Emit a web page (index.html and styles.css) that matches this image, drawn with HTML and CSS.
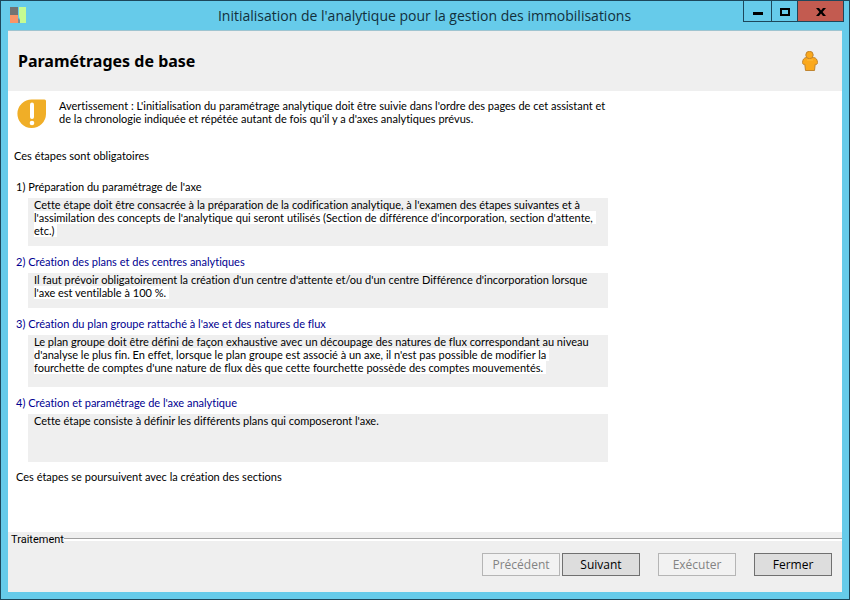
FILE: index.html
```html
<!DOCTYPE html>
<html lang="fr">
<head>
    <meta charset="UTF-8">
    <meta name="viewport" content="width=device-width, initial-scale=1.0">
    <title>Initialisation de l'analytique pour la gestion des immobilisations</title>
    <link rel="stylesheet" href="styles.css">
</head>
<body>
    <div class="window">
        <div class="titlebar">
            <svg class="app-icon" width="16" height="16" viewBox="0 0 16 16" aria-hidden="true">
                <rect width="8" height="8" fill="#737373"/>
                <rect y="8" width="8" height="8" fill="#fa9468"/>
                <path d="M9 0h7v16h-6V12L9 10z" fill="#c5fb92"/>
                <path d="M8 11l2 2v3H8z" fill="#7d8f93"/>
            </svg>
            <div class="title">Initialisation de l'analytique pour la gestion des immobilisations</div>
            <div class="controls">
                <button type="button" class="control minimize" aria-label="Réduire">
                    <svg width="12" height="10" viewBox="0 0 12 10"><path d="M1 5h10v3H1z"/></svg>
                </button>
                <button type="button" class="control maximize" aria-label="Agrandir">
                    <svg width="10" height="8" viewBox="0 0 10 8"><path d="M0 0h10v8H0zM2 2v4h6V2z" fill-rule="evenodd"/></svg>
                </button>
                <button type="button" class="control close" aria-label="Fermer la fenêtre">
                    <svg width="10" height="8" viewBox="0 0 10 8"><path d="M0 0h3l2 2.4L7 0h3L6.6 4 10 8H7L5 5.6 3 8H0l3.400-4z"/></svg>
                </button>
            </div>
        </div>

        <div class="client">
            <header class="header">
                <h1>Paramétrages de base</h1>
                <svg class="person" width="16" height="20" viewBox="0 0 16 20" aria-hidden="true">
                    <path d="M4.500 6.500C1.800 6.800.8 8.500.5 11.500c0 1.700 1.100 2.200 2.300 1.800L3.500 19.500h9L13.200 13.300c1.300.4 2.400-.2 2.300-1.800C15.200 8.500 14.200 6.800 11.500 6.500z" fill="#fba91c" stroke="#c08530"/>
                    <circle cx="7.500" cy="4" r="3.700" fill="#fba91c" stroke="#c08530"/>
                    <path d="M5 8h6v2H5z" fill="#fdb32c"/>
                </svg>
            </header>

            <main class="content">
                <div class="warning">
                    <svg width="30" height="30" viewBox="0 0 30 30" aria-hidden="true">
                        <path d="M15 .5H27.500Q29 .5 29 2V15A14.300 14.300 0 1 1 15 .5z" fill="#f0ae27"/>
                        <path d="M15 5.500V18" stroke="#fff" stroke-width="4" stroke-linecap="round"/>
                        <circle cx="15" cy="24" r="2.300" fill="#fff"/>
                    </svg>
                    <p>Avertissement : L'initialisation du paramétrage analytique doit être suivie dans l'ordre des pages de cet assistant et<br>
                    de la chronologie indiquée et répétée autant de fois qu'il y a d'axes analytiques prévus.</p>
                </div>

                <p class="intro">Ces étapes sont obligatoires</p>

                <div class="steps">
                    <section class="step">
                        <h2>1) Préparation du paramétrage de l'axe</h2>
                        <p class="box">Cette étape doit être consacrée à la préparation de la codification analytique, à l'examen des étapes suivantes et à<br>
                        <span class="fill">l'assimilation des concepts de l'analytique qui seront utilisés (Section de différence d'incorporation, section d'attente,<br>
                        etc.)</span></p>
                    </section>
                    <section class="step">
                        <h2><a href="#centres">2) Création des plans et des centres analytiques</a></h2>
                        <p class="box">Il faut prévoir obligatoirement la création d'un centre d'attente et/ou d'un centre Différence d'incorporation lorsque<br>
                        <span class="fill">l'axe est ventilable à 100 %.</span></p>
                    </section>
                    <section class="step">
                        <h2><a href="#groupe">3) Création du plan groupe rattaché à l'axe et des natures de flux</a></h2>
                        <p class="box large">Le plan groupe doit être défini de façon exhaustive avec un découpage des natures de flux correspondant au niveau<br>
                        <span class="fill">d'analyse le plus fin. En effet, lorsque le plan groupe est associé à un axe, il n'est pas possible de modifier la<br>
                        fourchette de comptes d'une nature de flux dès que cette fourchette possède des comptes mouvementés.</span></p>
                    </section>
                    <section class="step">
                        <h2><a href="#axe">4) Création et paramétrage de l'axe analytique</a></h2>
                        <p class="box medium">Cette étape consiste à définir les différents plans qui composeront l'axe.</p>
                    </section>
                </div>

                <p class="outro">Ces étapes se poursuivent avec la création des sections</p>
            </main>

            <footer class="footer">
                <div class="group-label">Traitement</div>
                <div class="buttons">
                    <div class="pair">
                        <button type="button" class="btn" disabled>Précédent</button>
                        <button type="button" class="btn">Suivant</button>
                    </div>
                    <button type="button" class="btn" disabled>Exécuter</button>
                    <button type="button" class="btn">Fermer</button>
                </div>
            </footer>
        </div>
    </div>
</body>
</html>
```
FILE: styles.css
```css
* { box-sizing: border-box; }
body {
    margin: 0;
    font-family: Lato, "Liberation Sans", Arial, sans-serif;
    font-size: 11px;
    font-variant-ligatures: none;
    line-height: 13px;
    color: #000;
}
h1, h2, p { margin: 0; }
.window {
    display: flex;
    flex-direction: column;
    min-height: 100vh;
    padding: 0 7px 7px;
    border: 1px solid #1d475b;
    background: #66cbea;
}

/* Title bar */
.titlebar { display: flex; align-items: flex-start; height: 29px; margin-right: -2px; }
.app-icon { margin: 6px 0 0 2px; }
.title {
    flex: 1;
    padding-left: 80px;
    text-align: center;
    font-family: "Open Sans", "Noto Sans", sans-serif;
    font-size: 14px;
    line-height: 29px;
    color: #12303c;
}
.controls { display: flex; margin-top: -1px; }
.control {
    display: flex;
    align-items: center;
    justify-content: center;
    width: 28px;
    height: 22px;
    margin: 0;
    padding: 2px 0 0;
    border: 1px solid #1d475b;
    border-right: none;
    background: #66cbea;
}
.maximize { width: 26px; }
.close { width: 47px; border-right: 1px solid #1d475b; background: #c35b50; }

/* Client area */
.client { display: flex; flex-direction: column; flex: 1; border-top: 1px solid #9fc4d0; background: #fff; }
.header {
    display: flex;
    align-items: center;
    justify-content: space-between;
    height: 60px;
    padding: 0 24px 0 10px;
    background: #efefef;
}
h1 { font-family: "Noto Sans", "Open Sans", sans-serif; font-size: 16px; line-height: 20px; }

.content { flex: 1; padding: 8px 8px 0; }
.warning { display: flex; gap: 12px; padding-left: 1px; }
.intro { margin: 20px 0 18px -2px; }
.steps { display: grid; gap: 9px; }
h2 { margin-bottom: 5px; font-size: 11px; font-weight: normal; line-height: 13px; }
a { color: #000090; text-decoration: none; }
.box { max-width: 580px; margin-left: 12px; padding: 0 6px 9px; background: #efefef; }
.medium { min-height: 48px; }
.large { min-height: 52px; }
.fill { padding-right: 3px; background: #fff; box-decoration-break: clone; -webkit-box-decoration-break: clone; }
.outro { margin-top: 8px; }

/* Footer */
.footer { height: 60px; background: #efefef; }
.group-label { display: flex; align-items: center; padding: 1px 0 0 3px; font-family: Roboto, "Noto Sans", sans-serif; }
.group-label::after { content: ""; flex: 1; height: 2px; border-top: 1px solid #a0a0a0; background: #fff; }
.buttons { display: flex; justify-content: flex-end; gap: 18px; padding: 7px 10px; }
.pair { display: flex; gap: 2px; }
.btn {
    width: 78px;
    height: 23px;
    padding: 0;
    border: 1px solid #707070;
    background: #dddddd;
    color: #000;
    font-family: "Open Sans", "Noto Sans", sans-serif;
    font-size: 12px;
}
.btn:disabled { border-color: #b5b5b5; background: #f2f2f2; color: #838383; }
```
